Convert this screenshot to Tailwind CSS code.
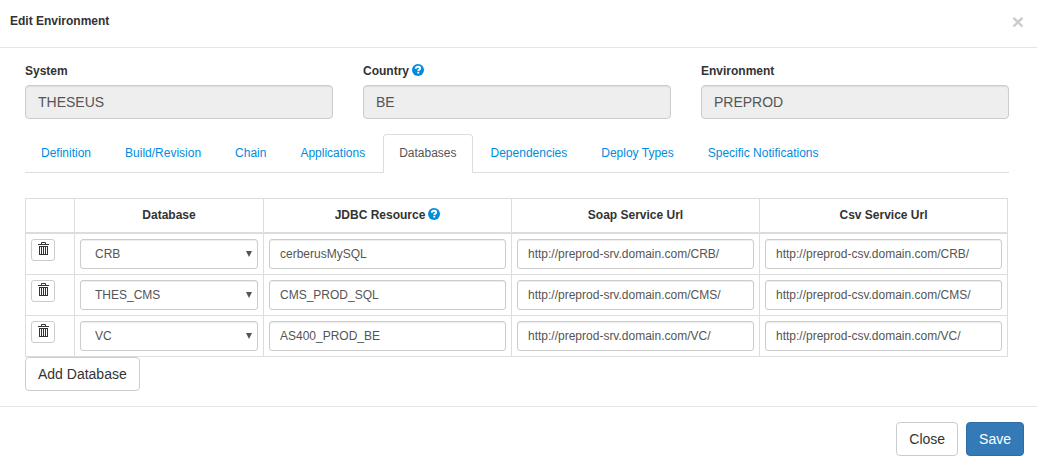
<!DOCTYPE html>
<html lang="en">
<head>
<meta charset="utf-8">
<meta name="viewport" content="width=device-width, initial-scale=1">
<title>Edit Environment</title>
<script src="https://cdn.jsdelivr.net/npm/@tailwindcss/browser@4"></script>
</head>
<body class="bg-white font-['Liberation_Sans',Arial,sans-serif] text-xs text-[#333]">
<svg class="hidden" aria-hidden="true">
  <symbol id="help" viewBox="0 0 12 12">
    <circle cx="6" cy="6" r="6" fill="#008cdd"/>
    <path d="M3.800 4.700C3.900 3.300 4.800 2.700 6.100 2.700c1.300 0 2.100.6 2.100 1.600 0 1.400-1.900 1.300-1.900 2.600" fill="none" stroke="#fff" stroke-width="1.900"/>
    <path d="M5.300 7.800h1.900v1.700H5.300z" fill="#fff"/>
  </symbol>
  <symbol id="trash" viewBox="0 0 11 13">
    <path d="M0 2.500h11M3.500 2V.5h4V2M1 4.500h9M1 12.500h9M1.500 5v7M3.500 5v7M5.500 5v7M7.500 5v7M9.500 5v7" fill="none" stroke="#333"/>
  </symbol>
  <symbol id="arrow" viewBox="0 0 6 6"><path d="M0 0h6L3 6z" fill="#555"/></symbol>
</svg>
<div role="dialog" aria-labelledby="title">
  <header class="flex h-12 items-start justify-between border-b border-[#e5e5e5] pt-3 pr-[13px] pl-2.5">
    <h4 id="title" class="font-bold leading-[18px]">Edit Environment</h4>
    <button type="button" aria-label="Close dialog" class="text-[21px] font-bold leading-5 text-[#ccc]">×</button>
  </header>
  <form>
    <div class="pt-3.5 pr-7 pb-[15px] pl-[25px]">
      <div class="grid grid-cols-3 gap-[30px]">
        <div>
          <label for="system" class="mb-[5px] block font-bold leading-[18px]">System</label>
          <input id="system" value="THESEUS" readonly class="block h-[34px] w-full rounded border border-[#ccc] bg-[#eee] px-3 text-sm text-[#555] shadow-[inset_0_1px_1px_rgba(0,0,0,0.075)]">
        </div>
        <div>
          <div class="mb-[5px] flex items-start gap-[3px] leading-[18px]">
            <label for="country" class="font-bold">Country</label>
            <svg class="mt-0.5 size-3" role="img" aria-label="Help"><use href="#help"/></svg>
          </div>
          <input id="country" value="BE" readonly class="block h-[34px] w-full rounded border border-[#ccc] bg-[#eee] px-3 text-sm text-[#555] shadow-[inset_0_1px_1px_rgba(0,0,0,0.075)]">
        </div>
        <div>
          <label for="environment" class="mb-[5px] block font-bold leading-[18px]">Environment</label>
          <input id="environment" value="PREPROD" readonly class="block h-[34px] w-full rounded border border-[#ccc] bg-[#eee] px-3 text-sm text-[#555] shadow-[inset_0_1px_1px_rgba(0,0,0,0.075)]">
        </div>
      </div>
      <nav class="mt-[15px] flex gap-0.5 border-b border-[#ddd] leading-[17px] text-[#008cdd]">
        <a href="#definition" class="-mb-px border border-transparent px-[15px] py-2.5">Definition</a>
        <a href="#build" class="-mb-px border border-transparent px-[15px] py-2.5">Build/Revision</a>
        <a href="#chain" class="-mb-px border border-transparent px-[15px] py-2.5">Chain</a>
        <a href="#applications" class="-mb-px border border-transparent px-[15px] py-2.5">Applications</a>
        <a href="#databases" aria-current="page" class="-mb-px rounded-t border border-[#ddd] border-b-white bg-white px-[15px] py-2.5 text-[#555]">Databases</a>
        <a href="#dependencies" class="-mb-px border border-transparent px-[15px] py-2.5">Dependencies</a>
        <a href="#deploy" class="-mb-px border border-transparent px-[15px] py-2.5">Deploy Types</a>
        <a href="#notifications" class="-mb-px border border-transparent px-[15px] py-2.5">Specific Notifications</a>
      </nav>
      <div class="mt-[25px] pr-px" id="databases">
        <table class="w-full table-fixed border-collapse">
          <colgroup><col class="w-[49px]"><col class="w-[189px]"><col><col><col></colgroup>
          <thead>
            <tr class="h-[34px]">
              <th aria-label="Delete" class="border border-b-2 border-[#ddd] p-0"></th>
              <th class="border border-b-2 border-[#ddd] p-0">Database</th>
              <th class="border border-b-2 border-[#ddd] p-0"><div class="flex items-start justify-center gap-[3px]">JDBC Resource <svg class="mt-px size-3" role="img" aria-label="Help"><use href="#help"/></svg></div></th>
              <th class="border border-b-2 border-[#ddd] p-0">Soap Service Url</th>
              <th class="border border-b-2 border-[#ddd] p-0">Csv Service Url</th>
            </tr>
          </thead>
          <tbody id="rows"></tbody>
        </table>
        <button type="button" class="block h-[34px] rounded border border-[#ccc] bg-white px-3 text-sm">Add Database</button>
      </div>
    </div>
    <footer class="flex justify-end gap-2 border-t border-[#e5e5e5] py-[15px] pr-[13px]">
      <button type="button" class="h-[34px] rounded border border-[#ccc] bg-white px-3 text-sm">Close</button>
      <button type="submit" class="h-[34px] rounded border border-[#2e6da4] bg-[#337ab7] px-3 text-sm text-white">Save</button>
    </footer>
  </form>
</div>
<script>
const databases = [
  ["CRB", "cerberusMySQL"],
  ["THES_CMS", "CMS_PROD_SQL"],
  ["VC", "AS400_PROD_BE"]
];
const paths = ["CRB", "CMS", "VC"];
const cell = "border border-[#ddd] p-[5px] align-top";
const field = "block h-[30px] w-full rounded-[3px] border border-[#ccc] bg-white px-2.5 text-xs text-[#555] shadow-[inset_0_1px_1px_rgba(0,0,0,0.075)]";
const input = (label, value) => `<td class="${cell}"><input aria-label="${label}" value="${value}" class="${field}"></td>`;
document.getElementById("rows").innerHTML = databases.map(([name, jdbc], i) => `
  <tr>
    <td class="${cell}"><button type="button" aria-label="Delete ${name}" class="flex h-[22px] w-6 items-start rounded-[3px] border border-[#ccc] bg-white pt-0.5 pl-1.5"><svg class="h-[13px] w-[11px]"><use href="#trash"/></svg></button></td>
    <td class="${cell}"><div class="relative">
      <select aria-label="Database" class="block h-[30px] w-full appearance-none rounded-[3px] border border-[#ccc] bg-white px-3.5 text-xs text-[#555] shadow-[inset_0_1px_1px_rgba(0,0,0,0.075)]">${databases.map(([n]) => `<option${n === name ? " selected" : ""}>${n}</option>`).join("")}</select>
      <svg class="pointer-events-none absolute top-3 right-1.5 size-1.5" aria-hidden="true"><use href="#arrow"/></svg>
    </div></td>
    ${input("JDBC Resource", jdbc)}
    ${input("Soap Service Url", `http://preprod-srv.domain.com/${paths[i]}/`)}
    ${input("Csv Service Url", `http://preprod-csv.domain.com/${paths[i]}/`)}
  </tr>`).join("");
</script>
</body>
</html>
